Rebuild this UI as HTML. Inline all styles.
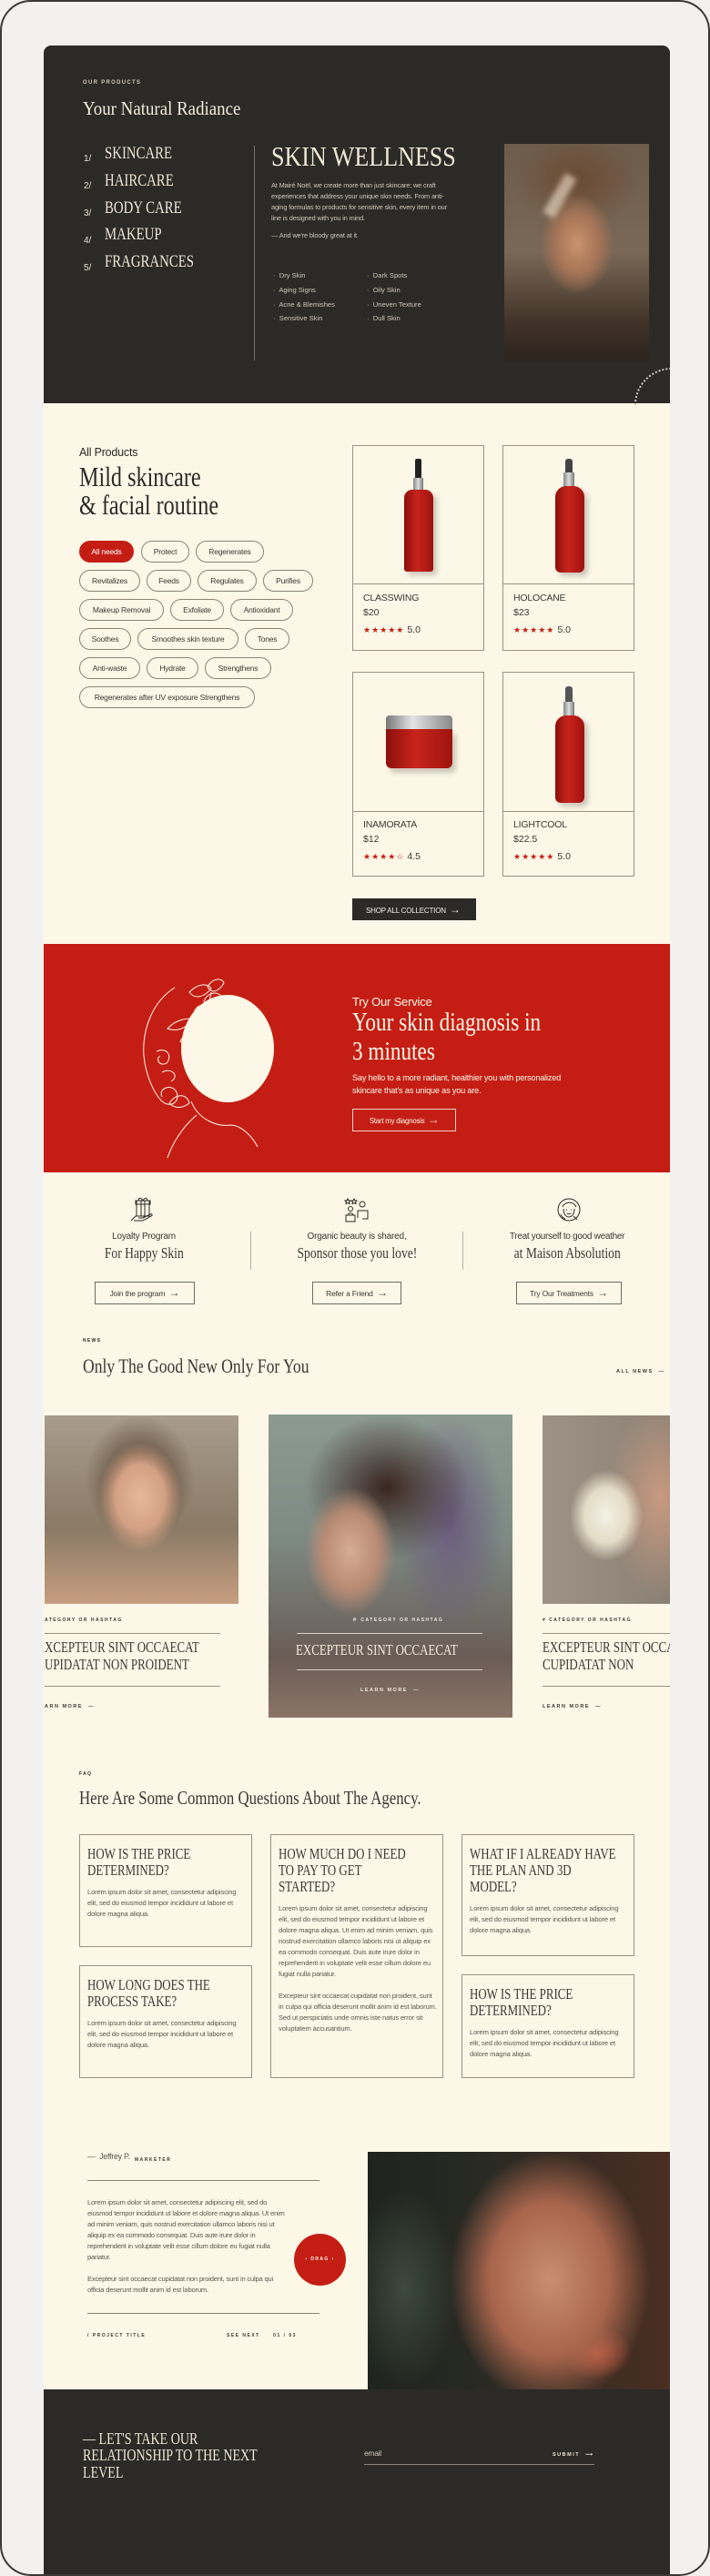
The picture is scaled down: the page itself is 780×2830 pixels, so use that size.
<!DOCTYPE html>
<html><head><meta charset="utf-8">
<style>
*{margin:0;padding:0;box-sizing:border-box}
body{width:780px;height:2830px;background:#f2f1ef;position:relative;overflow:hidden;font-family:"Liberation Sans",sans-serif;color:#2b2a27}
.a{position:absolute}
.frame{left:0;top:0;width:780px;height:2830px;border:2px solid #3a3937;border-radius:34px}
.panel{left:48px;top:50px;width:688px;height:2778px;background:#fdf7e7;border-radius:8px 8px 0 0;overflow:hidden}
.dark{background:#2b2a27}
.sv{position:absolute;font-family:"Liberation Serif",serif;white-space:nowrap;transform-origin:0 0;font-weight:400}
.tiny{font-size:6px;letter-spacing:1.3px;font-weight:700;text-transform:uppercase}
.chip{position:absolute;height:24px;border:1px solid #8a8378;border-radius:12px;font-size:8.5px;line-height:22px;text-align:center;color:#3a3835;letter-spacing:-.2px}
.card{position:absolute;width:145px;border:1px solid #9a9286}
.card .div{position:absolute;left:0;right:0;border-top:1px solid #9a9286}
.pn{position:absolute;left:11px;font-size:10.5px;color:#3a3835;letter-spacing:-.2px}
.pp{position:absolute;left:11px;font-size:10.5px;color:#3a3835}
.st{position:absolute;left:11px;font-size:9px;color:#c41e14;letter-spacing:1px}
.st b{color:#3a3835;font-weight:400;font-size:10.5px;margin-left:3px;letter-spacing:0}
.btn{position:absolute;border:1px solid #6f6a63;font-size:8.5px;color:#3a3835;text-align:center;letter-spacing:-.2px}
.faq{position:absolute;width:190px;border:1px solid #9a9286}
.faq .q{position:absolute;left:8px;top:12px;font-family:"Liberation Serif",serif;font-size:17px;line-height:18px;transform:scaleX(.76);transform-origin:0 0;width:240px;color:#3a3835}
.faq .t{position:absolute;left:8px;width:176px;font-size:7.6px;line-height:12px;color:#5a5650;letter-spacing:-.15px}
.lm{font-size:6px;letter-spacing:1.5px;font-weight:700}
</style></head><body>
<div class="a frame"></div>
<div class="a panel">
  <!-- HERO -->
  <div class="a dark" style="left:0;top:0;width:688px;height:393px"></div>
  <div class="a tiny" style="left:43px;top:38px;color:#cfc8b8">Our Products</div>
  <div class="sv" style="left:43px;top:57px;font-size:21px;color:#f3ecdc;transform:scaleX(.9)">Your Natural Radiance</div>
  <div class="a" style="left:44px;top:110px;color:#e8e0cf;font-size:10px;line-height:30px">1/<br>2/<br>3/<br>4/<br>5/</div>
  <div class="sv" style="left:67px;top:104px;font-size:19px;line-height:29.8px;color:#eee6d4;transform:scaleX(.78)">SKINCARE<br>HAIRCARE<br>BODY CARE<br>MAKEUP<br>FRAGRANCES</div>
  <div class="a" style="left:231px;top:110px;width:1px;height:236px;background:#77726a"></div>
  <div class="sv" style="left:250px;top:104px;font-size:31px;color:#eee6d4;transform:scaleX(.84)">SKIN WELLNESS</div>
  <div class="a" style="left:250px;top:148px;width:200px;font-size:7.4px;line-height:12px;color:#cfc8b8;letter-spacing:-.15px">At Mairé Noël, we create more than just skincare; we craft experiences that address your unique skin needs. From anti-aging formulas to products for sensitive skin, every item in our line is designed with you in mind.</div>
  <div class="a" style="left:250px;top:204px;font-size:7.4px;color:#cfc8b8;letter-spacing:-.15px">— And we're bloody great at it.</div>
  <div class="a" style="left:252px;top:245px;font-size:7.6px;line-height:15.8px;color:#cfc8b8">·&nbsp; Dry Skin<br>·&nbsp; Aging Signs<br>·&nbsp; Acne &amp; Blemishes<br>·&nbsp; Sensitive Skin</div>
  <div class="a" style="left:355px;top:245px;font-size:7.6px;line-height:15.8px;color:#cfc8b8">·&nbsp; Dark Spots<br>·&nbsp; Oily Skin<br>·&nbsp; Uneven Texture<br>·&nbsp; Dull Skin</div>
  <div class="a" style="left:506px;top:108px;width:159px;height:238px;background:radial-gradient(ellipse 40px 55px at 80px 110px,#c9936e 0%,#a47456 60%,transparent 100%),radial-gradient(ellipse 70px 50px at 80px 40px,#6b4a33,transparent),linear-gradient(180deg,#6d5c4b 0%,#7a6856 50%,#3e3026 85%,#2c241e 100%)"></div>
  <div class="a" style="left:560px;top:140px;width:14px;height:50px;background:rgba(255,240,220,.55);transform:rotate(30deg);filter:blur(3px)"></div>
  <svg class="a" style="left:640px;top:350px" width="60" height="50"><path d="M10 45 A40 40 0 0 1 50 5" fill="none" stroke="#cfc8b8" stroke-width="2" stroke-dasharray="2 2"/></svg>

  <!-- PRODUCTS -->
  <div class="a" style="left:39px;top:440px;font-size:12.5px;color:#2b2a27;letter-spacing:-.2px">All Products</div>
  <div class="sv" style="left:39px;top:458px;font-size:31px;line-height:31px;color:#2b2a27;transform:scaleX(.78)">Mild skincare<br>&amp; facial routine</div>
  <div class="chip" style="left:39px;top:544px;width:60px;background:#c41e14;border-color:#c41e14;color:#fff">All needs</div>
  <div class="chip" style="left:107px;top:544px;width:53px">Protect</div>
  <div class="chip" style="left:167px;top:544px;width:75px">Regenerates</div>
  <div class="chip" style="left:39px;top:576px;width:67px">Revitalizes</div>
  <div class="chip" style="left:113px;top:576px;width:49px">Feeds</div>
  <div class="chip" style="left:169px;top:576px;width:65px">Regulates</div>
  <div class="chip" style="left:241px;top:576px;width:55px">Purifies</div>
  <div class="chip" style="left:39px;top:608px;width:93px">Makeup Removal</div>
  <div class="chip" style="left:139px;top:608px;width:59px">Exfoliate</div>
  <div class="chip" style="left:205px;top:608px;width:69px">Antioxidant</div>
  <div class="chip" style="left:39px;top:640px;width:57px">Soothes</div>
  <div class="chip" style="left:103px;top:640px;width:111px">Smoothes skin texture</div>
  <div class="chip" style="left:221px;top:640px;width:49px">Tones</div>
  <div class="chip" style="left:39px;top:672px;width:67px">Anti-waste</div>
  <div class="chip" style="left:113px;top:672px;width:57px">Hydrate</div>
  <div class="chip" style="left:177px;top:672px;width:73px">Strengthens</div>
  <div class="chip" style="left:39px;top:704px;width:193px">Regenerates after UV exposure Strengthens</div>

  <!-- cards -->
  <div class="card" style="left:339px;top:439px;height:226px">
    <div class="a" style="left:68px;top:14px;width:7px;height:22px;background:#222;border-radius:2px"></div>
    <div class="a" style="left:66px;top:35px;width:11px;height:14px;background:linear-gradient(90deg,#888,#ddd,#777)"></div>
    <div class="a" style="left:56px;top:48px;width:32px;height:90px;background:linear-gradient(90deg,#8e0f0c,#c8241c 45%,#9e130f);border-radius:9px 9px 3px 3px;box-shadow:4px 4px 6px rgba(0,0,0,.2)"></div>
    <div class="div" style="top:151px"></div>
    <div class="pn" style="top:161px">CLASSWING</div><div class="pp" style="top:177px">$20</div><div class="st" style="top:196px">★★★★★<b>5.0</b></div>
  </div>
  <div class="card" style="left:504px;top:439px;height:226px">
    <div class="a" style="left:68px;top:14px;width:8px;height:16px;background:#444;border-radius:3px 3px 0 0"></div>
    <div class="a" style="left:66px;top:29px;width:12px;height:16px;background:linear-gradient(90deg,#888,#ddd,#777)"></div>
    <div class="a" style="left:57px;top:44px;width:32px;height:95px;background:linear-gradient(90deg,#8e0f0c,#c8241c 45%,#9e130f);border-radius:12px 12px 6px 6px;box-shadow:4px 4px 6px rgba(0,0,0,.2)"></div>
    <div class="div" style="top:151px"></div>
    <div class="pn" style="top:161px">HOLOCANE</div><div class="pp" style="top:177px">$23</div><div class="st" style="top:196px">★★★★★<b>5.0</b></div>
  </div>
  <div class="card" style="left:339px;top:688px;height:225px">
    <div class="a" style="left:36px;top:47px;width:73px;height:16px;background:linear-gradient(90deg,#777,#e4e4e4 40%,#888);border-radius:4px 4px 0 0"></div>
    <div class="a" style="left:36px;top:62px;width:73px;height:43px;background:linear-gradient(90deg,#8e0f0c,#c8241c 45%,#9e130f);border-radius:0 0 6px 6px;box-shadow:4px 5px 6px rgba(0,0,0,.2)"></div>
    <div class="div" style="top:152px"></div>
    <div class="pn" style="top:161px">INAMORATA</div><div class="pp" style="top:177px">$12</div><div class="st" style="top:196px">★★★★☆<b>4.5</b></div>
  </div>
  <div class="card" style="left:504px;top:688px;height:225px">
    <div class="a" style="left:68px;top:15px;width:8px;height:18px;background:#555;border-radius:3px 3px 0 0"></div>
    <div class="a" style="left:66px;top:32px;width:12px;height:16px;background:linear-gradient(90deg,#888,#ddd,#777)"></div>
    <div class="a" style="left:57px;top:47px;width:32px;height:96px;background:linear-gradient(90deg,#8e0f0c,#c8241c 45%,#9e130f);border-radius:12px 12px 6px 6px;box-shadow:4px 4px 6px rgba(0,0,0,.2)"></div>
    <div class="div" style="top:152px"></div>
    <div class="pn" style="top:161px">LIGHTCOOL</div><div class="pp" style="top:177px">$22.5</div><div class="st" style="top:196px">★★★★★<b>5.0</b></div>
  </div>
  <div class="a" style="left:339px;top:937px;width:136px;height:24px;background:#2b2a27;color:#eee;font-size:8px;line-height:24px;padding-left:15px;letter-spacing:-.2px">SHOP ALL COLLECTION&nbsp;&nbsp;<span style="font-size:12px">→</span></div>

  <!-- RED -->
  <div class="a" style="left:0;top:987px;width:688px;height:251px;background:#c41e14"></div>
  <svg class="a" style="left:80px;top:1010px" width="180" height="215" viewBox="0 0 180 215" fill="none" stroke="#fdf7e7" stroke-width="1">
    <path d="M64 25 C40 40 28 70 30 100 C32 120 40 140 50 150 C60 158 70 150 66 140 C62 130 45 135 50 145"/>
    <path d="M44 95 C55 90 62 100 55 108 C48 112 42 104 48 100"/>
    <path d="M50 118 C60 112 70 122 60 128"/>
    <path d="M56 70 C65 60 78 58 84 60 C76 70 66 74 56 70Z"/>
    <path d="M70 84 C74 76 82 74 86 76 C82 86 76 90 70 84Z"/>
    <path d="M58 152 C66 140 78 142 80 152 C72 158 64 158 58 152Z"/>
    <path d="M80 30 C90 20 100 20 104 26 C96 36 86 38 80 30Z"/>
    <path d="M100 24 C106 14 116 14 118 20 C112 30 104 32 100 24Z"/>
    <path d="M96 40 C100 30 112 28 116 36 C110 46 100 48 96 40Z"/>
    <path d="M86 50 C90 42 102 42 104 50 C98 58 90 58 86 50Z"/>
    <path d="M104 30 C100 50 96 70 92 90"/>
    <path d="M82 150 C90 170 110 178 125 176 C138 176 150 190 155 200"/>
    <path d="M88 165 C70 180 60 200 56 212"/>
  </svg>
  <div class="a" style="left:151px;top:1043px;width:102px;height:118px;border-radius:50%;background:#fdf7e7"></div>
  <div class="a" style="left:339px;top:1043px;font-size:13px;color:#fdf7e7;letter-spacing:-.2px">Try Our Service</div>
  <div class="sv" style="left:339px;top:1057px;font-size:29px;line-height:32px;color:#fdf7e7;transform:scaleX(.8)">Your skin diagnosis in<br>3 minutes</div>
  <div class="a" style="left:339px;top:1127px;width:240px;font-size:9.2px;line-height:14px;color:#fdf7e7;letter-spacing:-.2px">Say hello to a more radiant, healthier you with personalized skincare that's as unique as you are.</div>
  <div class="btn" style="left:339px;top:1168px;width:114px;height:25px;border-color:#f3d0c8;color:#fdf7e7;line-height:23px;font-size:7.8px">Start my diagnosis&nbsp;&nbsp;<span style="font-size:12px">→</span></div>

  <!-- FEATURES -->
  <svg class="a" style="left:95px;top:1264px" width="30" height="30" fill="none" stroke="#2b2a27" stroke-width="1"><rect x="7" y="5" width="14" height="17"/><rect x="6" y="5" width="16" height="4"/><path d="M12 5v17M16 5v17M10 5c-2-3 2-4 4 0c2-4 6-3 4 0M1 27l5-5h8c2 0 2 2 0 2h-5M14 24l8-4c2-1 3 1 1 2l-9 5H4"/></svg>
  <svg class="a" style="left:330px;top:1264px" width="30" height="30" fill="none" stroke="#2b2a27" stroke-width="1"><path d="M4 3l1 2 2 0-1.5 1.5.5 2-2-1-2 1 .5-2L1 5h2zM11 3l1 2 2 0-1.5 1.5.5 2-2-1-2 1 .5-2L8 5h2z"/><circle cx="20" cy="9" r="3"/><circle cx="7" cy="14" r="2.5"/><path d="M2 28v-7h10v7zM15 24v-8h11v9h-6M4 21c0-3 6-3 6 0"/></svg>
  <svg class="a" style="left:562px;top:1264px" width="30" height="30" fill="none" stroke="#2b2a27" stroke-width="1"><circle cx="15" cy="15" r="12"/><path d="M8 12c2-6 12-7 15 0M9 14c0 6 3 9 6 9s6-3 6-9M12 15h1M17 15h1M13 19c1 1 3 1 4 0M20 22l4 4M6 20c1 3 3 4 5 5"/></svg>
  <div class="a" style="left:55px;top:1303px;width:110px;text-align:center;font-size:10px;color:#3a3835;letter-spacing:-.2px">Loyalty Program</div>
  <div class="a" style="left:20px;top:1317px;width:180px;text-align:center"><span class="sv" style="position:relative;display:inline-block;font-size:17px;transform:scaleX(.8);transform-origin:50% 0;color:#3a3835">For Happy Skin</span></div>
  <div class="a" style="left:274px;top:1303px;width:140px;text-align:center;font-size:10px;color:#3a3835;letter-spacing:-.2px">Organic beauty is shared,</div>
  <div class="a" style="left:244px;top:1317px;width:200px;text-align:center"><span class="sv" style="position:relative;display:inline-block;font-size:17px;transform:scaleX(.8);transform-origin:50% 0;color:#3a3835">Sponsor those you love!</span></div>
  <div class="a" style="left:490px;top:1303px;width:170px;text-align:center;font-size:10px;color:#3a3835;letter-spacing:-.3px">Treat yourself to good weather</div>
  <div class="a" style="left:475px;top:1317px;width:200px;text-align:center"><span class="sv" style="position:relative;display:inline-block;font-size:17px;transform:scaleX(.8);transform-origin:50% 0;color:#3a3835">at Maison Absolution</span></div>
  <div class="a" style="left:227px;top:1303px;width:1px;height:42px;background:#b8b0a4"></div>
  <div class="a" style="left:460px;top:1303px;width:1px;height:42px;background:#b8b0a4"></div>
  <div class="btn" style="left:56px;top:1358px;width:110px;height:25px;line-height:23px">Join the program&nbsp;&nbsp;<span style="font-size:12px">→</span></div>
  <div class="btn" style="left:295px;top:1358px;width:98px;height:25px;line-height:23px">Refer a Friend&nbsp;&nbsp;<span style="font-size:12px">→</span></div>
  <div class="btn" style="left:519px;top:1358px;width:116px;height:25px;line-height:23px">Try Our Treatments&nbsp;&nbsp;<span style="font-size:12px">→</span></div>

  <!-- NEWS -->
  <div class="a tiny" style="left:43px;top:1420px;font-size:5px">News</div>
  <div class="sv" style="left:43px;top:1438px;font-size:22px;color:#3a3835;transform:scaleX(.8)">Only The Good New Only For You</div>
  <div class="a lm" style="left:629px;top:1454px;color:#3a3835;font-size:5.5px">ALL NEWS&nbsp; —</div>
  <div class="a" style="left:1px;top:1505px;width:213px;height:207px;background:radial-gradient(ellipse 45px 60px at 105px 90px,#e6b99a,#d3a183 60%,transparent 100%),radial-gradient(ellipse 60px 70px at 105px 70px,#4a3326,transparent),linear-gradient(180deg,#a89c8c,#8a7a66 60%,#c79e80)"></div>
  <div class="a lm" style="left:1px;top:1727px;color:#3a3835;font-size:5px">ATEGORY OR HASHTAG</div>
  <div class="a" style="left:1px;top:1744px;width:193px;border-top:1px solid #9a9286"></div>
  <div class="sv" style="left:1px;top:1751px;font-size:17px;line-height:18.5px;color:#3a3835;transform:scaleX(.76)">XCEPTEUR SINT OCCAECAT<br>UPIDATAT NON PROIDENT</div>
  <div class="a" style="left:1px;top:1802px;width:193px;border-top:1px solid #9a9286"></div>
  <div class="a lm" style="left:1px;top:1822px;color:#3a3835;font-size:5.5px">ARN MORE&nbsp; —</div>
  <div class="a" style="left:247px;top:1504px;width:268px;height:333px;background:radial-gradient(ellipse 50px 70px at 90px 150px,#d7ad95,#b98b74 60%,transparent 100%),radial-gradient(ellipse 90px 80px at 130px 80px,#3a2520,transparent),radial-gradient(ellipse 60px 120px at 200px 120px,#6b5b7e,transparent),linear-gradient(180deg,#8d9a92,#7d8b84 40%,#6a5c56 80%,#8c7466)"></div>
  <div class="a lm" style="left:339px;top:1726px;color:#f0e8dc;font-size:5px">＃ CATEGORY OR HASHTAG</div>
  <div class="a" style="left:278px;top:1744px;width:204px;border-top:1px solid #d8d0c4"></div>
  <div class="sv" style="left:277px;top:1753px;font-size:17px;color:#f3ecdc;transform:scaleX(.76)">EXCEPTEUR SINT OCCAECAT</div>
  <div class="a" style="left:278px;top:1784px;width:204px;border-top:1px solid #d8d0c4"></div>
  <div class="a lm" style="left:348px;top:1804px;color:#f0e8dc;font-size:5.5px">LEARN MORE&nbsp; —</div>
  <div class="a" style="left:548px;top:1505px;width:140px;height:207px;background:radial-gradient(ellipse 40px 50px at 70px 110px,#f4f1e6,#e3dcc6 60%,transparent 100%),radial-gradient(ellipse 60px 110px at 130px 90px,#c99a80,transparent),linear-gradient(90deg,#9c9286,#8a8074)"></div>
  <div class="a lm" style="left:548px;top:1727px;color:#3a3835;font-size:5px"># CATEGORY OR HASHTAG</div>
  <div class="a" style="left:548px;top:1744px;width:140px;border-top:1px solid #9a9286"></div>
  <div class="sv" style="left:548px;top:1751px;font-size:17px;line-height:18.5px;color:#3a3835;transform:scaleX(.76)">EXCEPTEUR SINT OCCAECAT<br>CUPIDATAT NON</div>
  <div class="a" style="left:548px;top:1802px;width:140px;border-top:1px solid #9a9286"></div>
  <div class="a lm" style="left:548px;top:1822px;color:#3a3835;font-size:5.5px">LEARN MORE&nbsp; —</div>

  <!-- FAQ -->
  <div class="a tiny" style="left:39px;top:1896px;font-size:5px">FAQ</div>
  <div class="sv" style="left:39px;top:1913px;font-size:21px;color:#3a3835;transform:scaleX(.8)">Here Are Some Common Questions About The Agency.</div>
  <div class="faq" style="left:39px;top:1965px;height:124px"><div class="q">HOW IS THE PRICE<br>DETERMINED?</div><div class="t" style="top:57px">Lorem ipsum dolor sit amet, consectetur adipiscing elit, sed do eiusmod tempor incididunt ut labore et dolore magna aliqua.</div></div>
  <div class="faq" style="left:39px;top:2109px;height:124px"><div class="q">HOW LONG DOES THE<br>PROCESS TAKE?</div><div class="t" style="top:57px">Lorem ipsum dolor sit amet, consectetur adipiscing elit, sed do eiusmod tempor incididunt ut labore et dolore magna aliqua.</div></div>
  <div class="faq" style="left:249px;top:1965px;height:268px"><div class="q">HOW MUCH DO I NEED<br>TO PAY TO GET<br>STARTED?</div><div class="t" style="top:75px">Lorem ipsum dolor sit amet, consectetur adipiscing elit, sed do eiusmod tempor incididunt ut labore et dolore magna aliqua. Ut enim ad minim veniam, quis nostrud exercitation ullamco laboris nisi ut aliquip ex ea commodo consequat. Duis aute irure dolor in reprehenderit in voluptate velit esse cillum dolore eu fugiat nulla pariatur.<br><br>Excepteur sint occaecat cupidatat non proident, sunt in culpa qui officia deserunt mollit anim id est laborum. Sed ut perspiciatis unde omnis iste natus error sit voluptatem accusantium.</div></div>
  <div class="faq" style="left:459px;top:1965px;height:134px"><div class="q">WHAT IF I ALREADY HAVE<br>THE PLAN AND 3D<br>MODEL?</div><div class="t" style="top:75px">Lorem ipsum dolor sit amet, consectetur adipiscing elit, sed do eiusmod tempor incididunt ut labore et dolore magna aliqua.</div></div>
  <div class="faq" style="left:459px;top:2119px;height:114px"><div class="q">HOW IS THE PRICE<br>DETERMINED?</div><div class="t" style="top:57px">Lorem ipsum dolor sit amet, consectetur adipiscing elit, sed do eiusmod tempor incididunt ut labore et dolore magna aliqua.</div></div>

  <!-- TESTIMONIAL -->
  <div class="a" style="left:48px;top:2314px;font-size:9px;color:#5a5650;letter-spacing:-.3px">—&nbsp; Jeffrey P.</div>
  <div class="a lm" style="left:100px;top:2320px;color:#3a3835;font-size:5px">MARKETER</div>
  <div class="a" style="left:48px;top:2345px;width:255px;border-top:1px solid #8a8378"></div>
  <div class="a" style="left:48px;top:2364px;width:222px;font-size:7.6px;line-height:12px;color:#5a5650;letter-spacing:-.2px">Lorem ipsum dolor sit amet, consectetur adipiscing elit, sed do eiusmod tempor incididunt ut labore et dolore magna aliqua. Ut enim ad minim veniam, quis nostrud exercitation ullamco laboris nisi ut aliquip ex ea commodo consequat. Duis aute irure dolor in reprehenderit in voluptate velit esse cillum dolore eu fugiat nulla pariatur.<br><br>Excepteur sint occaecat cupidatat non proident, sunt in culpa qui officia deserunt mollit anim id est laborum.</div>
  <div class="a" style="left:48px;top:2491px;width:255px;border-top:1px solid #8a8378"></div>
  <div class="a lm" style="left:48px;top:2513px;color:#3a3835;font-size:5px">/ PROJECT TITLE</div>
  <div class="a lm" style="left:201px;top:2513px;color:#3a3835;font-size:5px">SEE NEXT&nbsp;&nbsp;&nbsp;&nbsp; 01 / 03</div>
  <div class="a" style="left:275px;top:2404px;width:57px;height:57px;border-radius:50%;background:#c41e14;color:#fdf7e7;font-size:5px;letter-spacing:1.4px;font-weight:700;text-align:center;line-height:57px">‹ DRAG ›</div>
  <div class="a" style="left:356px;top:2314px;width:332px;height:261px;background:radial-gradient(ellipse 110px 140px at 200px 140px,#c88e72,#a8654c 60%,transparent 100%),radial-gradient(ellipse 40px 30px at 250px 220px,#d25a40,transparent),radial-gradient(ellipse 60px 110px at 40px 150px,#3d4a3c,transparent),linear-gradient(90deg,#1e241e,#2a2a24 40%,#4a2e22)"></div>

  <!-- FOOTER -->
  <div class="a dark" style="left:0;top:2575px;width:688px;height:210px"></div>
  <div class="sv" style="left:43px;top:2620px;font-size:18px;line-height:18.3px;color:#eee6d4;transform:scaleX(.78)">— LET'S TAKE OUR<br>RELATIONSHIP TO THE NEXT<br>LEVEL</div>
  <div class="a" style="left:352px;top:2640px;font-size:8.5px;color:#cfc8b8;letter-spacing:-.3px">email</div>
  <div class="a lm" style="left:559px;top:2644px;color:#eee6d4;font-size:5.5px">SUBMIT&nbsp; ⟶</div>
  <div class="a" style="left:352px;top:2657px;width:253px;border-top:1px solid #8a8378"></div>
</div>
</body></html>
